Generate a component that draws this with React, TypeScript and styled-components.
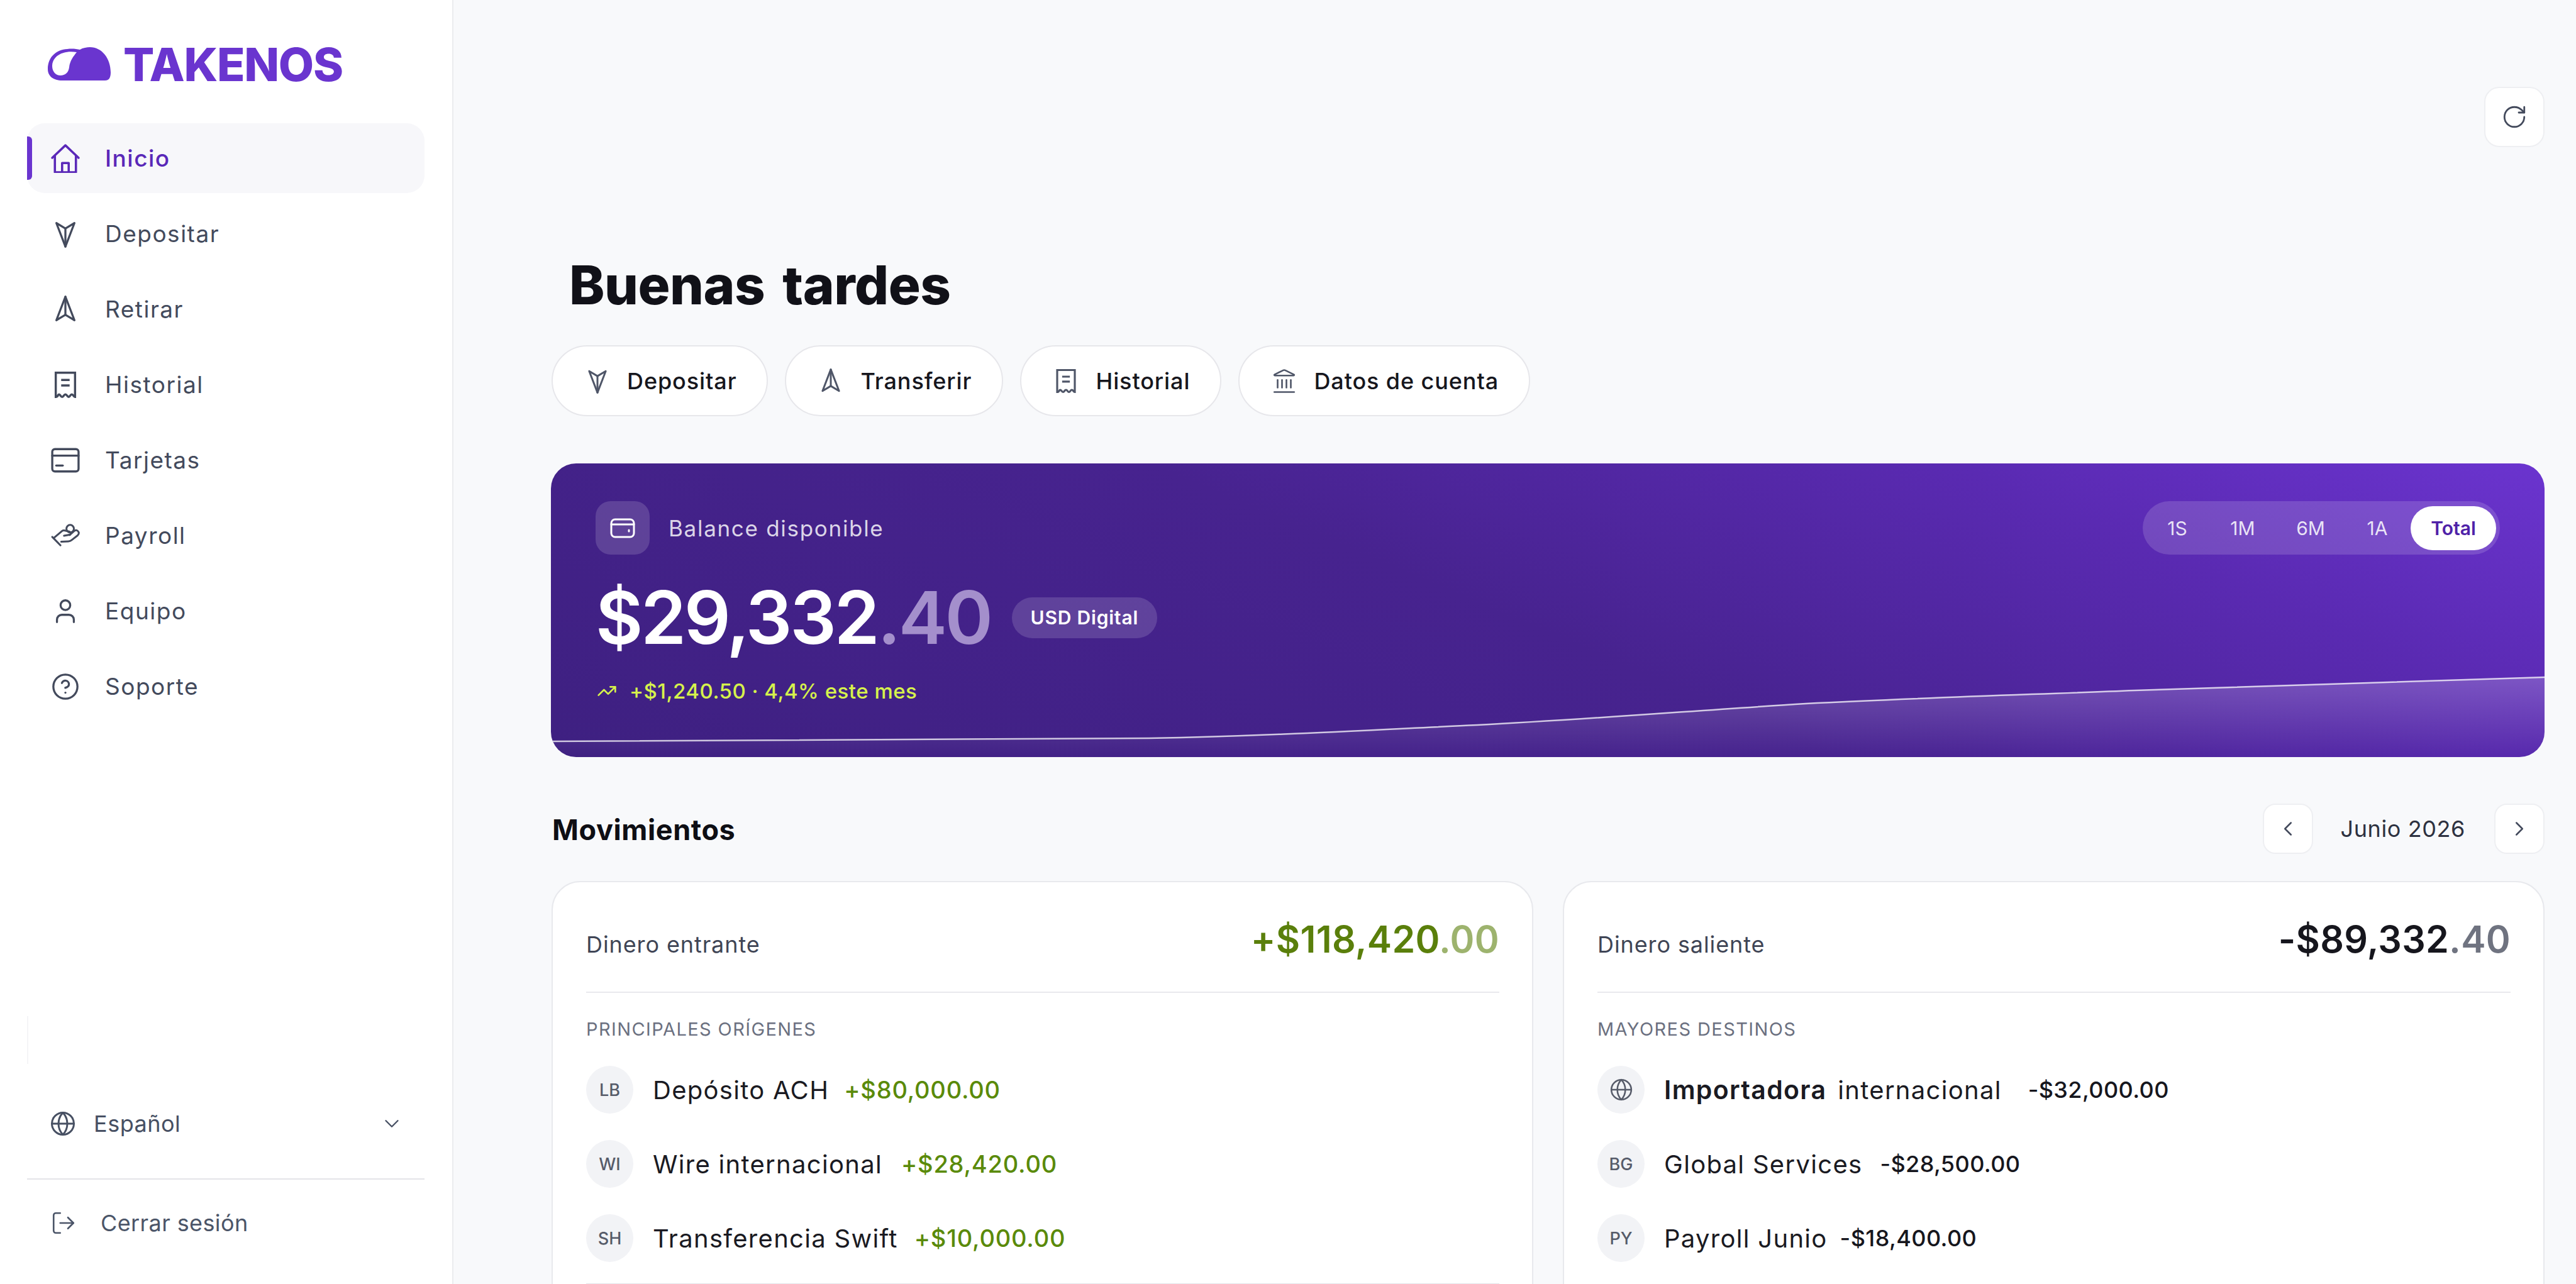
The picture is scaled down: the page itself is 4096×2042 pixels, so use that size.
import React from "react";
import styled, { createGlobalStyle } from "styled-components";
import { ChevronDown, ChevronLeft, ChevronRight, CircleHelp, Globe, Landmark, LogOut, RotateCw, TrendingUp, User } from "lucide-react";

const GlobalStyle = createGlobalStyle`
  html, body {
    margin: 0;
    padding: 0;
    background: #f8f9fb;
  }
  body {
    font-family: "Inter", "Liberation Sans", sans-serif;
    color: #14141b;
    overflow: hidden;
  }
  * {
    box-sizing: border-box;
  }
`;

const Layout = styled.div`
  display: flex;
  width: 4096px;
  height: 2042px;
  overflow: hidden;
`;

const Sidebar = styled.aside`
  width: 721px;
  flex: none;
  height: 100%;
  background: #fff;
  border-right: 2px solid #ebecef;
  padding: 73px 44px 29px 43px;
  display: flex;
  flex-direction: column;
`;

const Logo = styled.div`
  display: flex;
  align-items: center;
  gap: 20px;
  height: 58px;
  padding-left: 32px;
  color: #6a35cf;
  font-size: 73px;
  font-weight: 800;
  letter-spacing: -1.3px;
  line-height: 1;
`;

const Nav = styled.nav`
  display: flex;
  flex-direction: column;
  gap: 9px;
  margin-top: 65px;
`;

const NavItem = styled.a<{ $active?: boolean }>`
  position: relative;
  display: flex;
  align-items: center;
  gap: 40px;
  height: 111px;
  padding-left: 38px;
  border-radius: 28px;
  background: ${(p) => (p.$active ? "#f7f7fa" : "transparent")};
  color: ${(p) => (p.$active ? "#5a28b8" : "#434a5c")};
  font-size: 37px;
  font-weight: ${(p) => (p.$active ? 500 : 400)};
  letter-spacing: 1.5px;

  ${(p) =>
    p.$active &&
    `&::before {
      content: "";
      position: absolute;
      left: 0;
      top: 21px;
      width: 8px;
      height: 69px;
      background: #6a35cf;
      border-radius: 0 6px 6px 0;
    }`}
`;

const NavIcon = styled.span`
  display: flex;
  width: 46px;
  height: 46px;
  flex: none;
`;

const SidebarFooter = styled.div`
  margin-top: auto;
  display: flex;
  flex-direction: column;
`;

const GhostLine = styled.div`
  height: 76px;
  width: 2px;
  background: #f5f5f7;
  margin-bottom: 65px;
`;

const LangRow = styled.div`
  display: flex;
  align-items: center;
  gap: 28px;
  height: 60px;
  padding: 0 33px 0 36px;
  color: #475063;
  font-size: 36px;
  letter-spacing: 0.5px;
`;

const LangLabel = styled.span`
  flex: 1;
`;

const FooterDivider = styled.div`
  height: 2px;
  margin-top: 57px;
  background: #e4e4e8;
`;

const LogoutRow = styled.div`
  display: flex;
  align-items: center;
  gap: 38px;
  height: 137px;
  padding-left: 37px;
  color: #4b5568;
  font-size: 36px;
  letter-spacing: 0.4px;
`;

const Main = styled.main`
  flex: 1;
  min-width: 0;
  padding: 138px 50px 0 155px;
  display: flex;
  flex-direction: column;

  & > * {
    flex: none;
  }
`;

const TopBar = styled.div`
  display: flex;
  justify-content: flex-end;
`;

const IconButton = styled.button<{ $size: number; $radius: number }>`
  width: ${(p) => p.$size}px;
  height: ${(p) => p.$size}px;
  flex: none;
  display: flex;
  align-items: center;
  justify-content: center;
  padding: 0;
  background: #fff;
  border: 2px solid #eeeff2;
  border-radius: ${(p) => p.$radius}px;
  color: #434a5c;
`;

const Title = styled.h1`
  margin: 170px 0 0 29px;
  font-size: 85px;
  font-weight: 800;
  line-height: 100px;
  letter-spacing: -0.5px;
  color: #111118;
  word-spacing: 10px;
`;

const Actions = styled.div`
  display: flex;
  gap: 27px;
  margin-top: 45px;
  margin-left: 1px;
`;

const ActionButton = styled.button`
  height: 113px;
  display: flex;
  align-items: center;
  gap: 26px;
  padding: 0 48px 0 50px;
  background: #fff;
  border: 2px solid #e7e7eb;
  border-radius: 57px;
  color: #16161d;
  font-family: inherit;
  font-size: 36px;
  font-weight: 500;
  letter-spacing: 0.9px;
`;

const ActionIcon = styled.span`
  display: flex;
  width: 42px;
  height: 42px;
  color: #4f5668;
`;

const BalanceCard = styled.section`
  position: relative;
  height: 467px;
  margin-top: 75px;
  border-radius: 40px;
  overflow: hidden;
  padding: 60px 71px 0 71px;
  color: #fff;
  background: linear-gradient(203deg, #6b34cf 0%, #5a2ab2 22%, #47238f 52%, #3e2081 100%);
`;

const SparkLayer = styled.svg`
  position: absolute;
  left: 0;
  bottom: 0;
  width: 100%;
  height: 140px;
`;

const BalanceHead = styled.div`
  position: relative;
  display: flex;
  align-items: center;
  justify-content: space-between;
`;

const BalanceLabel = styled.div`
  display: flex;
  align-items: center;
  gap: 30px;
  font-size: 35px;
  letter-spacing: 1.7px;
  color: rgba(255, 255, 255, 0.82);
`;

const WalletTile = styled.span`
  width: 86px;
  height: 85px;
  display: flex;
  align-items: center;
  justify-content: center;
  background: rgba(255, 255, 255, 0.15);
  border-radius: 24px;
  color: #fff;
`;

const RangeSwitch = styled.div`
  display: flex;
  align-items: center;
  height: 85px;
  padding: 0 6px 0 6px;
  background: rgba(255, 255, 255, 0.15);
  border-radius: 43px;
`;

const RangeOption = styled.span<{ $active?: boolean; $width: number }>`
  width: ${(p) => p.$width}px;
  height: 70px;
  display: flex;
  align-items: center;
  justify-content: center;
  border-radius: 35px;
  font-size: 30px;
  font-weight: ${(p) => (p.$active ? 600 : 400)};
  color: ${(p) => (p.$active ? "#4f22a8" : "rgba(255,255,255,0.86)")};
  background: ${(p) => (p.$active ? "#fff" : "transparent")};
`;

const AmountRow = styled.div`
  position: relative;
  display: flex;
  align-items: center;
  gap: 33px;
  margin-top: 35px;
`;

const Amount = styled.div`
  font-size: 116px;
  font-weight: 600;
  line-height: 130px;
  letter-spacing: -3.5px;
`;

const Decimals = styled.span<{ $color: string }>`
  color: ${(p) => p.$color};
`;

const Badge = styled.span`
  height: 65px;
  display: flex;
  align-items: center;
  padding: 0 30px;
  border-radius: 33px;
  background: rgba(255, 255, 255, 0.15);
  font-size: 30px;
  font-weight: 600;
  letter-spacing: 0.8px;
`;

const Growth = styled.div`
  position: relative;
  display: flex;
  align-items: center;
  gap: 20px;
  margin-top: 32px;
  margin-left: 2px;
  color: #d6f24c;
  font-size: 33px;
  font-weight: 500;
  letter-spacing: 0.5px;
`;

const MovesHead = styled.div`
  display: flex;
  align-items: center;
  height: 80px;
  margin-top: 74px;
`;

const MovesTitle = styled.h2`
  flex: 1;
  margin: 3px 0 0 2px;
  font-size: 45px;
  font-weight: 700;
  letter-spacing: 0.6px;
  color: #0e0e14;
`;

const MonthLabel = styled.span`
  margin: 0 46px 0 44px;
  font-size: 36px;
  letter-spacing: 0.6px;
  color: #2d3140;
`;

const Cards = styled.div`
  display: grid;
  grid-template-columns: 1561px 1561px;
  gap: 47px;
  margin-top: 43px;
  margin-left: 1px;
`;

const MoveCard = styled.section`
  height: 760px;
  padding: 0 52px 0 53px;
  background: #fff;
  border: 2px solid #e8e9ed;
  border-radius: 46px;
`;

const CardHead = styled.div`
  display: flex;
  align-items: center;
  justify-content: space-between;
  height: 176px;
  border-bottom: 2px solid #e9e9ed;
`;

const CardLabel = styled.span`
  margin-top: 24px;
  font-size: 36px;
  letter-spacing: 0.9px;
  color: #3f4555;
`;

const CardAmount = styled.span<{ $color: string }>`
  margin-top: 6px;
  font-size: 59px;
  font-weight: 600;
  letter-spacing: 0.3px;
  color: ${(p) => p.$color};
`;

const SectionLabel = styled.div`
  margin-top: 41px;
  font-size: 29px;
  letter-spacing: 1.4px;
  color: #6b7080;
  text-transform: uppercase;
  line-height: 34px;
`;

const RowList = styled.div`
  display: flex;
  flex-direction: column;
  gap: 42px;
  margin-top: 41px;
`;

const MoveRow = styled.div`
  display: flex;
  align-items: center;
  height: 76px;
`;

const Avatar = styled.span`
  width: 75px;
  height: 76px;
  flex: none;
  display: flex;
  align-items: center;
  justify-content: center;
  margin-right: 31px;
  border-radius: 50%;
  background: #f2f3f6;
  color: #565b69;
  font-size: 27px;
  font-weight: 500;
`;

const MoveName = styled.span<{ $strong?: boolean }>`
  font-size: ${(p) => (p.$strong ? 41 : 40)}px;
  font-weight: ${(p) => (p.$strong ? 600 : 400)};
  letter-spacing: 1.3px;
  color: #1a1a22;
  margin-right: ${(p) => (p.$strong ? 18 : 0)}px;
`;

const MoveAmount = styled.span<{ $color: string; $gap: number; $size: number }>`
  margin-left: ${(p) => p.$gap}px;
  font-size: ${(p) => p.$size}px;
  font-weight: 500;
  letter-spacing: ${(p) => (p.$size > 37 ? 0.8 : 0.4)}px;
  color: ${(p) => p.$color};
`;

const CardEnd = styled.div`
  height: 2px;
  background: #e4e4e8;
  margin-top: 34px;
`;

const strokeProps = {
  fill: "none",
  stroke: "currentColor",
  strokeLinecap: "round" as const,
  strokeLinejoin: "round" as const,
};

function HomeIcon() {
  return (
    <svg viewBox="0 0 44 44" width="46" height="46" {...strokeProps} strokeWidth="3.4">
      <path d="M2 21 22 2l20 19" />
      <path d="M6 18v25h32V18" />
      <path d="M17 43V29h10v14" />
    </svg>
  );
}

function ArrowDart({ down, size = 46 }: { down?: boolean; size?: number }) {
  return (
    <svg viewBox="0 0 24 24" width={size} height={size} {...strokeProps} strokeWidth="1.7">
      <g transform={down ? "rotate(180 12 12)" : undefined}>
        <path d="M12 1.5 19.5 21 12 16.5 4.5 21Z" />
        <path d="M12 1.5V16.5" />
      </g>
    </svg>
  );
}

function ReceiptIcon({ size = 46 }: { size?: number }) {
  return (
    <svg viewBox="0 0 24 24" width={size} height={size} fill="none" stroke="currentColor" strokeWidth="1.8">
      <path d="M4 22V2h16v20c-1.3 0-1.4-2-2.7-2s-1.4 2-2.6 2-1.4-2-2.7-2-1.4 2-2.7 2-1.4-2-2.6-2-.4 2-2.7 2Z" />
      <path d="M8.5 8h7M8.5 12.5h7" />
    </svg>
  );
}

function CardIcon() {
  return (
    <svg viewBox="0 0 44 44" width="46" height="46" {...strokeProps} strokeWidth="3.2">
      <rect x="2" y="5" width="40" height="34" rx="4" />
      <path d="M2 15h40" />
      <path d="M8 30h10" />
    </svg>
  );
}

function PayrollIcon() {
  return (
    <svg viewBox="25 45 155 155" width="50" height="50" {...strokeProps} strokeWidth="10">
      <circle cx="128" cy="78" r="20" />
      <path d="M32 122 76 167" />
      <path d="M40 128 85 90q5-4 15-2l25 6q10 4 3 16l-33 6" />
      <path d="M125 112l25-22q15-10 24 8 2 8-6 16l-33 26q-7 6-17 6l-38 2" />
    </svg>
  );
}

function WalletIcon() {
  return (
    <svg viewBox="0 0 40 32" width="40" height="32" {...strokeProps} strokeWidth="3">
      <rect x="2" y="2" width="36" height="28" rx="6" />
      <path d="M2 10h36" />
      <path d="M30 19v2" />
    </svg>
  );
}

function LogoMark() {
  return (
    <svg viewBox="0 0 101 54" width="101" height="54">
      <path
        fill="#6a35cf"
        fillRule="evenodd"
        d="M1 35C1 15 15 4 32 3 40 2 47 3 52 4 57 1 63 0 68 0 87 0 101 18 101 40 101 49 98 53 92 53H24C10 53 1 46 1 35ZM47 8C40 7 32 7 26 9 15 12 8 20 8 30 8 39 14 45 21 45 29 45 34 40 35 32 36 22 42 14 47 8Z"
      />
    </svg>
  );
}

const navItems = [
  { label: "Inicio", icon: <HomeIcon />, active: true },
  { label: "Depositar", icon: <ArrowDart down /> },
  { label: "Retirar", icon: <ArrowDart /> },
  { label: "Historial", icon: <ReceiptIcon /> },
  { label: "Tarjetas", icon: <CardIcon /> },
  { label: "Payroll", icon: <PayrollIcon /> },
  { label: "Equipo", icon: <User size={46} strokeWidth={1.7} /> },
  { label: "Soporte", icon: <CircleHelp size={46} strokeWidth={1.7} /> },
];

const actions = [
  { label: "Depositar", icon: <ArrowDart down size={42} /> },
  { label: "Transferir", icon: <ArrowDart size={42} /> },
  { label: "Historial", icon: <ReceiptIcon size={42} /> },
  { label: "Datos de cuenta", icon: <Landmark size={42} strokeWidth={1.5} /> },
];

const ranges = [
  { label: "1S", width: 98 },
  { label: "1M", width: 110 },
  { label: "6M", width: 106 },
  { label: "1A", width: 106 },
  { label: "Total", width: 136, active: true },
];

const GREEN = "#5a8a0a";
const INK = "#16161d";
const SPARK_LINE =
  "M0 115C400 114 700 114 951 110 1150 106 1300 97 1473 89 1650 80 1820 66 1995 55 2170 46 2340 41 2518 34 2740 27 2950 20 3170 13";

const incoming = [
  { initials: "LB", name: "Depósito ACH", amount: "+$80,000.00", gap: 24 },
  { initials: "WI", name: "Wire internacional", amount: "+$28,420.00", gap: 30 },
  { initials: "SH", name: "Transferencia Swift", amount: "+$10,000.00", gap: 26 },
];

const outgoing = [
  { initials: "BG", name: "Global Services", amount: "-$28,500.00", gap: 28 },
  { initials: "PY", name: "Payroll Junio", amount: "-$18,400.00", gap: 20 },
];

export default function App() {
  return (
    <Layout>
      <GlobalStyle />
      <Sidebar>
        <Logo>
          <LogoMark />
          TAKENOS
        </Logo>
        <Nav>
          {navItems.map((item) => (
            <NavItem key={item.label} $active={item.active}>
              <NavIcon>{item.icon}</NavIcon>
              {item.label}
            </NavItem>
          ))}
        </Nav>
        <SidebarFooter>
          <GhostLine />
          <LangRow>
            <Globe size={42} strokeWidth={1.7} />
            <LangLabel>Español</LangLabel>
            <ChevronDown size={38} strokeWidth={1.5} />
          </LangRow>
          <FooterDivider />
          <LogoutRow>
            <LogOut size={42} strokeWidth={1.5} />
            Cerrar sesión
          </LogoutRow>
        </SidebarFooter>
      </Sidebar>
      <Main>
        <TopBar>
          <IconButton $size={96} $radius={24}>
            <RotateCw size={42} strokeWidth={1.6} />
          </IconButton>
        </TopBar>
        <Title>Buenas tardes</Title>
        <Actions>
          {actions.map((action) => (
            <ActionButton key={action.label}>
              <ActionIcon>{action.icon}</ActionIcon>
              {action.label}
            </ActionButton>
          ))}
        </Actions>
        <BalanceCard>
          <SparkLayer viewBox="0 0 3170 140" preserveAspectRatio="none">
            <defs>
              <linearGradient id="sparkFill" x1="0" y1="0" x2="0" y2="1">
                <stop offset="0" stopColor="#fff" stopOpacity="0.2" />
                <stop offset="1" stopColor="#fff" stopOpacity="0" />
              </linearGradient>
            </defs>
            <path fill="url(#sparkFill)" d={`${SPARK_LINE}V140H0Z`} />
            <path fill="none" stroke="#ffffff" strokeOpacity="0.75" strokeWidth="2.5" d={SPARK_LINE} />
          </SparkLayer>
          <BalanceHead>
            <BalanceLabel>
              <WalletTile>
                <WalletIcon />
              </WalletTile>
              Balance disponible
            </BalanceLabel>
            <RangeSwitch>
              {ranges.map((range) => (
                <RangeOption key={range.label} $active={range.active} $width={range.width}>
                  {range.label}
                </RangeOption>
              ))}
            </RangeSwitch>
          </BalanceHead>
          <AmountRow>
            <Amount>
              $29,332<Decimals $color="#a48fcc">.40</Decimals>
            </Amount>
            <Badge>USD Digital</Badge>
          </AmountRow>
          <Growth>
            <TrendingUp size={32} strokeWidth={2} />
            +$1,240.50 · 4,4% este mes
          </Growth>
        </BalanceCard>
        <MovesHead>
          <MovesTitle>Movimientos</MovesTitle>
          <IconButton $size={80} $radius={20}>
            <ChevronLeft size={38} strokeWidth={1.6} />
          </IconButton>
          <MonthLabel>Junio 2026</MonthLabel>
          <IconButton $size={80} $radius={20}>
            <ChevronRight size={38} strokeWidth={1.6} />
          </IconButton>
        </MovesHead>
        <Cards>
          <MoveCard>
            <CardHead>
              <CardLabel>Dinero entrante</CardLabel>
              <CardAmount $color="#5a7f0b">
                +$118,420<Decimals $color="#9db36e">.00</Decimals>
              </CardAmount>
            </CardHead>
            <SectionLabel>Principales orígenes</SectionLabel>
            <RowList>
              {incoming.map((row) => (
                <MoveRow key={row.initials}>
                  <Avatar>{row.initials}</Avatar>
                  <MoveName>{row.name}</MoveName>
                  <MoveAmount $color={GREEN} $gap={row.gap} $size={38}>
                    {row.amount}
                  </MoveAmount>
                </MoveRow>
              ))}
            </RowList>
            <CardEnd />
          </MoveCard>
          <MoveCard>
            <CardHead>
              <CardLabel>Dinero saliente</CardLabel>
              <CardAmount $color={INK}>
                -$89,332<Decimals $color="#6f7380">.40</Decimals>
              </CardAmount>
            </CardHead>
            <SectionLabel>Mayores destinos</SectionLabel>
            <RowList>
              <MoveRow>
                <Avatar>
                  <Globe size={38} strokeWidth={1.6} />
                </Avatar>
                <MoveName $strong>Importadora</MoveName>
                <MoveName>internacional</MoveName>
                <MoveAmount $color={INK} $gap={42} $size={36}>
                  -$32,000.00
                </MoveAmount>
              </MoveRow>
              {outgoing.map((row) => (
                <MoveRow key={row.initials}>
                  <Avatar>{row.initials}</Avatar>
                  <MoveName>{row.name}</MoveName>
                  <MoveAmount $color={INK} $gap={row.gap} $size={36}>
                    {row.amount}
                  </MoveAmount>
                </MoveRow>
              ))}
            </RowList>
          </MoveCard>
        </Cards>
      </Main>
    </Layout>
  );
}
